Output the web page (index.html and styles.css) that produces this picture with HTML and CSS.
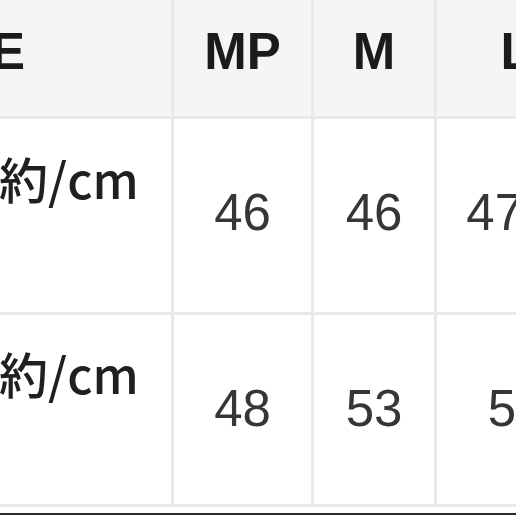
FILE: index.html
```html
<!DOCTYPE html>
<html lang="ja">
<head>
<meta charset="utf-8">
<link rel="stylesheet" href="styles.css">
</head>
<body>
<div class="page">
  <div class="table">
    <div class="cell head first"><span>SIZE</span></div>
    <div class="cell head">MP</div>
    <div class="cell head">M</div>
    <div class="cell head">L</div>

    <div class="cell label r2"><span>身幅 約/cm</span></div>
    <div class="cell num r2">46</div>
    <div class="cell num r2">46</div>
    <div class="cell num r2">47.5</div>

    <div class="cell label r3"><span>着丈 約/cm</span></div>
    <div class="cell num r3">48</div>
    <div class="cell num r3">53</div>
    <div class="cell num r3">55</div>
  </div>
  <div class="rule"></div>
</div>
</body>
</html>
```

FILE: styles.css
```css
html, body {
  margin: 0;
  padding: 0;
  background: #ffffff;
}

.page {
  width: 516px;
  height: 516px;
  overflow: hidden;
  font-family: "Liberation Sans", "Noto Sans CJK JP", sans-serif;
}

.table {
  display: grid;
  grid-template-columns: 281px 137px 120px 158px;
  grid-template-rows: 116px 193px 189px;
  gap: 3px;
  padding-bottom: 3px;
  background: #e9e9e9;
  margin-left: -110px;
  width: 708px;
}

.cell {
  background: #ffffff;
  line-height: 1;
  white-space: nowrap;
  text-align: center;
}

.head {
  background: #f5f5f5;
  font-weight: bold;
  font-size: 51px;
  color: #1b1b1b;
  padding-top: 26px;
}

.head.first {
  text-align: right;
  padding-right: 146px;
}

.num {
  font-size: 51px;
  color: #363636;
  padding-top: 68px;
}

.label {
  font-family: "Noto Sans CJK JP", "Liberation Sans", sans-serif;
  font-weight: 500;
  font-size: 49px;
  color: #202020;
  text-align: right;
  padding-right: 44px;
  padding-top: 34px;
  letter-spacing: 0;
}

.label.r3 {
  padding-top: 33px;
}

.rule {
  margin-top: 6px;
  height: 2px;
  background: #2a2a2a;
}
```
